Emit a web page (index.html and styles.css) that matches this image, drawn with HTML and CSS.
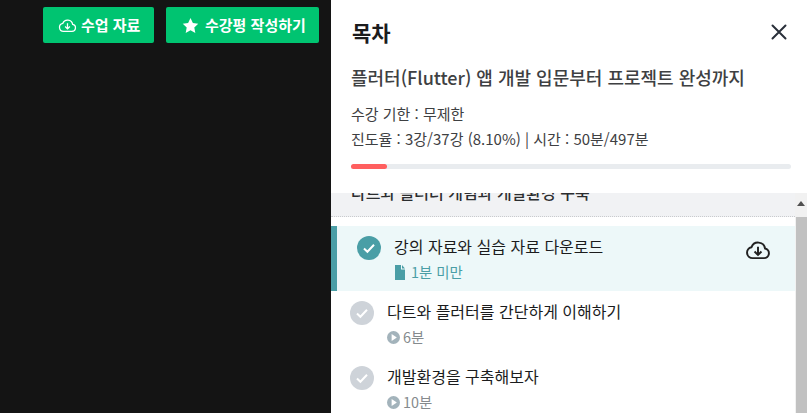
FILE: index.html
```html
<!DOCTYPE html>
<html lang="ko">
<head>
    <meta charset="utf-8" />
    <title>목차</title>
    <link rel="stylesheet" href="styles.css">
</head>
<body>
    <div id="contents">
        <div id="mainContents">
            <a class="green-btn btn-files">
                <svg class="btn-icon" viewBox="0 0 24 24"><path d="M7 19.5h10.5a4.5 4.5 0 0 0 1-8.9A6.5 6.5 0 0 0 6 9.4a5.1 5.1 0 0 0 1 10.1z" fill="none" stroke="#fff" stroke-width="1.6"/><path d="M12 9v7M9 13.2l3 3 3-3" fill="none" stroke="#fff" stroke-width="1.6"/></svg>
                수업 자료
            </a>
            <a class="green-btn btn-review">
                <svg class="btn-icon" viewBox="0 0 24 24"><path d="M12 2.5l3 6.3 6.8.9-5 4.8 1.3 6.9-6.1-3.4-6.1 3.4 1.3-6.9-5-4.8 6.8-.9z" fill="#fff"/></svg>
                수강평 작성하기
            </a>
        </div>

        <div id="panel">
            <div class="panel-head">
                <div class="title-row">
                    <h2>목차</h2>
                    <svg class="close" viewBox="0 0 16 16"><path d="M1.5 1.5l13 13M14.5 1.5l-13 13" stroke="#2a303a" stroke-width="2" stroke-linecap="round"/></svg>
                </div>
                <h3>플러터(Flutter) 앱 개발 입문부터 프로젝트 완성까지</h3>
                <p class="info">수강 기한 : 무제한</p>
                <p class="info">진도율 : 3강/37강 (8.10%) | 시간 : 50분/497분</p>
                <div class="progress"><div class="progress-fill" style="width: 8.1%"></div></div>
            </div>

            <div class="curriculum">
                <div class="list">
                    <div class="section">다트와 플러터 개념과 개발환경 구축</div>
                    <div class="item current">
                        <svg class="check" viewBox="0 0 24 24"><circle cx="12" cy="12" r="12" fill="#4a9ea6"/><path d="M7 12.5l3.4 3.3L17 8.8" fill="none" stroke="#fff" stroke-width="2"/></svg>
                        <div class="item-text">
                            <div class="item-title">강의 자료와 실습 자료 다운로드</div>
                            <div class="item-meta">
                                <svg class="meta-icon" viewBox="0 0 10 15"><path d="M0 0h6v4.5h4V15H0zM7 0l3 3.5H7z" fill="#4a9ea6"/></svg>
                                1분 미만
                            </div>
                        </div>
                        <svg class="download" viewBox="0 0 24 24"><path d="M7 19.5h10.5a4.5 4.5 0 0 0 1-8.9A6.5 6.5 0 0 0 6 9.4a5.1 5.1 0 0 0 1 10.1z" fill="none" stroke="#222" stroke-width="1.8"/><path d="M12 9v7.5M8.8 13.4l3.2 3.2 3.2-3.2" fill="none" stroke="#222" stroke-width="1.8"/></svg>
                    </div>
                    <div class="item">
                        <svg class="check" viewBox="0 0 24 24"><circle cx="12" cy="12" r="12" fill="#ced3d9"/><path d="M7 12.5l3.4 3.3L17 8.8" fill="none" stroke="#fff" stroke-width="2"/></svg>
                        <div class="item-text">
                            <div class="item-title">다트와 플러터를 간단하게 이해하기</div>
                            <div class="item-meta">
                                <svg class="meta-icon play" viewBox="0 0 14 14"><circle cx="7" cy="7" r="7" fill="#a3b3bb"/><path d="M5 3.2l5.6 3.8L5 10.8z" fill="#fff"/></svg>
                                6분
                            </div>
                        </div>
                    </div>
                    <div class="item">
                        <svg class="check" viewBox="0 0 24 24"><circle cx="12" cy="12" r="12" fill="#ced3d9"/><path d="M7 12.5l3.4 3.3L17 8.8" fill="none" stroke="#fff" stroke-width="2"/></svg>
                        <div class="item-text">
                            <div class="item-title">개발환경을 구축해보자</div>
                            <div class="item-meta">
                                <svg class="meta-icon play" viewBox="0 0 14 14"><circle cx="7" cy="7" r="7" fill="#a3b3bb"/><path d="M5 3.2l5.6 3.8L5 10.8z" fill="#fff"/></svg>
                                10분
                            </div>
                        </div>
                    </div>
                </div>
                <div class="scrollbar">
                    <div class="arrow"></div>
                    <div class="thumb"></div>
                </div>
            </div>
        </div>
    </div>
</body>
</html>
```

FILE: styles.css
```css
* {
    box-sizing: border-box;
}

html, body {
    margin: 0;
    height: 100%;
    overflow: hidden;
}

body {
    font-family: "Noto Sans CJK KR", "Noto Sans", sans-serif;
    background: #141414;
}

#contents {
    display: flex;
    width: 100%;
    height: 413px;
}

#mainContents {
    width: 331px;
    display: flex;
    justify-content: flex-end;
    align-items: flex-start;
    gap: 12px;
    padding: 7px 12px 0 0;
}

.green-btn {
    height: 36px;
    display: flex;
    align-items: center;
    padding-left: 15px;
    padding-bottom: 2px;
    background: #00c471;
    color: #fff;
    font-size: 15px;
    font-weight: 700;
    border-radius: 2px;
}

.btn-files {
    width: 111px;
    gap: 4px;
}

.btn-review {
    width: 153px;
    padding-left: 15px;
    gap: 5px;
}

.btn-icon {
    width: 19px;
    height: 19px;
    margin-top: 2px;
}

#panel {
    width: 476px;
    background: #fff;
    display: flex;
    flex-direction: column;
}

.panel-head {
    height: 193px;
    padding: 17px 16px 0 20px;
}

.title-row {
    display: flex;
    justify-content: space-between;
    align-items: center;
    height: 30px;
}

h2 {
    margin: 0;
    padding-left: 1px;
    font-size: 21px;
    font-weight: 700;
    color: #1b1c1d;
}

.close {
    width: 16px;
    height: 16px;
    margin-right: 4px;
}

h3 {
    margin: 16px 0 10px;
    font-size: 18px;
    line-height: 28px;
    font-weight: 500;
    color: #3e4042;
}

.info {
    margin: 0;
    font-size: 15px;
    line-height: 25px;
    color: #3e4042;
}

.progress {
    margin-top: 13px;
    height: 5px;
    background: #e9ecef;
    border-radius: 3px;
}

.progress-fill {
    height: 5px;
    background: #ff5f5f;
    border-radius: 3px;
}

.curriculum {
    flex: 1;
    display: flex;
    overflow: hidden;
}

.list {
    flex: 1;
    overflow: hidden;
}

.section {
    height: 33px;
    margin-top: -9px;
    padding-left: 20px;
    margin-bottom: 9px;
    background: #f1f2f4;
    border-bottom: 1px dotted #c9cbce;
    font-size: 16px;
    line-height: 17px;
    font-weight: 500;
    color: #2b2d2f;
}

.item {
    height: 65px;
    display: flex;
    align-items: flex-start;
    padding: 10px 0 0 19px;
}

.item.current {
    background: #edf8f9;
    border-left: 6px solid #4a9ea6;
    padding-left: 20px;
}

.check {
    width: 24px;
    height: 24px;
    flex-shrink: 0;
}

.item-text {
    flex: 1;
    margin-left: 13px;
}

.item-title {
    margin-top: -1px;
    font-size: 16px;
    line-height: 22px;
    color: #1b1c1d;
}

.item-meta {
    display: flex;
    align-items: center;
    gap: 6px;
    margin-top: 5px;
    font-size: 14.4px;
    line-height: 20px;
    color: #858a8d;
}

.current .item-meta {
    color: #4a9ea6;
}

.meta-icon {
    width: 10px;
    height: 15px;
    margin-left: 1px;
}

.meta-icon.play {
    width: 13px;
    height: 13px;
    margin: 0 -3px 0 0;
}

.download {
    width: 26px;
    height: 26px;
    margin: 1px 24px 0 0;
}

.scrollbar {
    width: 12px;
    background: #f1f1f1;
    display: flex;
    flex-direction: column;
}

.arrow {
    height: 24px;
    padding-bottom: 3px;
    display: flex;
    align-items: center;
    justify-content: center;
}

.arrow::before {
    content: "";
    border-left: 4px solid transparent;
    border-right: 4px solid transparent;
    border-bottom: 5px solid #505050;
}

.thumb {
    flex: 1;
    margin-left: 1px;
    background: #c1c1c1;
}
```
